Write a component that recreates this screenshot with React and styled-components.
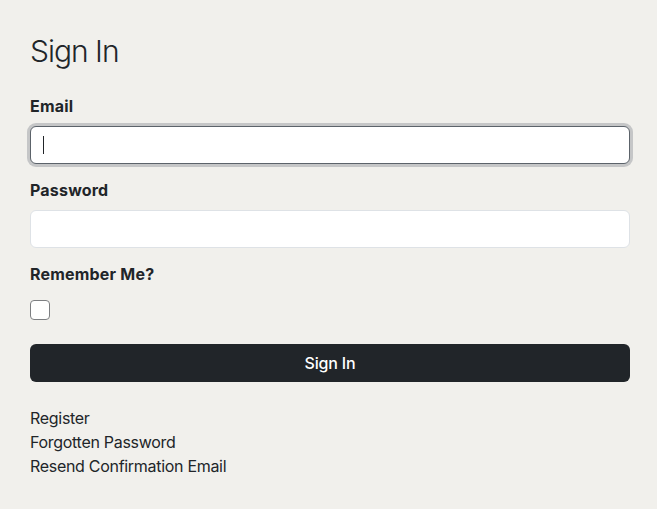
import React from "react";
import styled, { createGlobalStyle, css } from "styled-components";

const GlobalStyle = createGlobalStyle`
  * { box-sizing: border-box; }
  body {
    margin: 0;
    background: #f1f0ec;
    color: #212529;
    font-family: Inter, "Noto Sans", "Liberation Sans", sans-serif;
    font-size: 16px;
    line-height: 24px;
  }
`;

const Page = styled.main`
  width: 600px;
  margin-left: 30px;
  padding-top: 33px;
`;

const Title = styled.h1`
  margin: 0 0 25px;
  font-size: 30px;
  line-height: 36px;
  font-weight: 300;
  letter-spacing: -1px;
`;

const Form = styled.form`
  display: flex;
  flex-direction: column;
`;

const Group = styled.div`
  display: flex;
  flex-direction: column;
  margin-bottom: 14px;
`;

const Label = styled.label`
  display: block;
  margin-bottom: 8px;
  font-weight: 650;
  letter-spacing: 0.2px;
`;

const FieldWrap = styled.div`
  position: relative;
`;

const Input = styled.input`
  display: block;
  width: 100%;
  height: 38px;
  padding: 6px 12px;
  font: inherit;
  background: #fff;
  border: 1px solid #dee2e6;
  border-radius: 6px;
  outline: none;
  caret-color: transparent;
  ${(p) =>
    p.$focused &&
    css`
      border-color: #5c636a;
      box-shadow: 0 0 0 3px #c5c6c7;
    `}
`;

const Caret = styled.span`
  position: absolute;
  left: 13px;
  top: 10px;
  width: 1px;
  height: 18px;
  background: #212529;
`;

const Check = styled.span`
  display: block;
  width: 20px;
  height: 20px;
  margin: 6px 0 24px;
  background: #fff;
  border: 1px solid #7d7f82;
  border-radius: 4px;
`;

const Button = styled.button`
  height: 38px;
  width: 100%;
  border: none;
  border-radius: 6px;
  background: #212529;
  color: #fff;
  font: inherit;
  font-weight: 500;
  letter-spacing: -0.2px;
  margin-bottom: 24px;
`;

const Links = styled.div`
  display: flex;
  flex-direction: column;
`;

const LinkItem = styled.a`
  color: #212529;
  text-decoration: none;
  letter-spacing: -0.3px;
`;

export default function App() {
  return (
    <>
      <GlobalStyle />
      <Page>
        <Title>Sign In</Title>
        <Form onSubmit={(e) => e.preventDefault()}>
          <Group>
            <Label>Email</Label>
            <FieldWrap>
              <Input type="email" $focused />
              <Caret />
            </FieldWrap>
          </Group>
          <Group>
            <Label>Password</Label>
            <Input type="password" />
          </Group>
          <Label>Remember Me?</Label>
          <Check />
          <Button type="submit">Sign In</Button>
        </Form>
        <Links>
          <LinkItem href="#">Register</LinkItem>
          <LinkItem href="#">Forgotten Password</LinkItem>
          <LinkItem href="#">Resend Confirmation Email</LinkItem>
        </Links>
      </Page>
    </>
  );
}
